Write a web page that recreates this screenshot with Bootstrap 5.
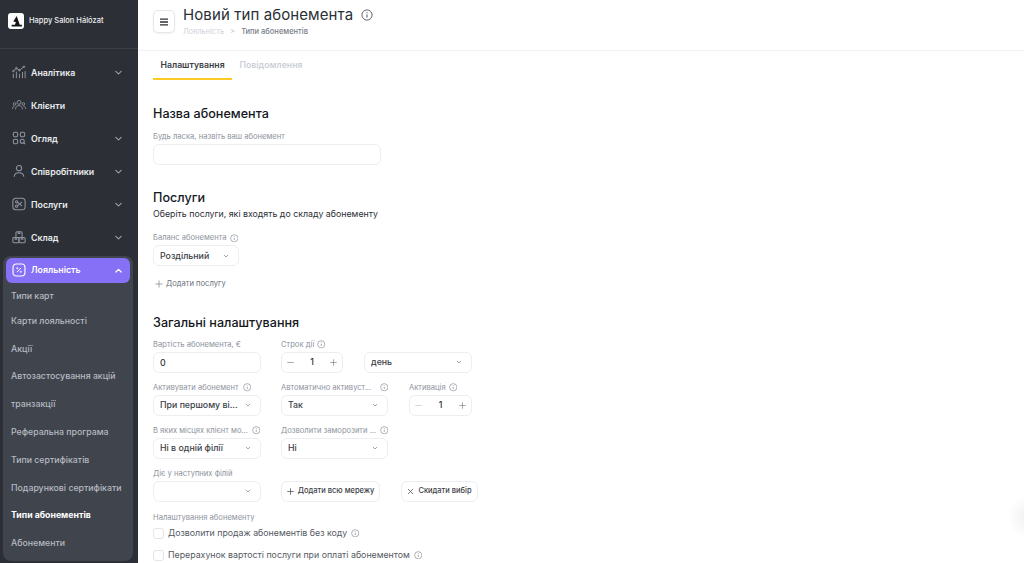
<!DOCTYPE html>
<html lang="uk">
<head>
  <meta charset="UTF-8">
  <title>Новий тип абонемента</title>
  <meta name="viewport" content="width=device-width, initial-scale=1">
  <link href="https://cdn.jsdelivr.net/npm/bootstrap@5.3.3/dist/css/bootstrap.min.css" rel="stylesheet">
  <style>
    html, body { height: 563px; overflow: hidden; }
    body { font-family: Inter, "Noto Sans", sans-serif; background: #fff; color: #1b1e24; font-size: 10px; }
    .app-shell { height: 563px; }

    /* sidebar */
    .side { width: 138px; flex: none; background: #2c3036; color: #fff; height: 563px; overflow: hidden; }
    .brand-row { height: 49px; padding: 13px 8px 0; border-bottom: 1px solid #3a3e45; font-size: 7.5px; font-weight: 500; gap: 5px; margin-bottom: 7px; }
    .brand-logo { width: 16px; height: 16px; background: #fff; border-radius: 3px; flex: none; }
    .brand-name { line-height: 16px; color: #eceef1; }
    .side-item { height: 33px; padding: 0 15px 0 11.5px; font-size: 8.8px; font-weight: 600; color: #e9ebee; gap: 5.5px; }
    .side-item .ic { width: 14px; height: 14px; color: #8f95a0; flex: none; }
    .side-item .caret-ic { width: 9px; height: 9px; color: #a3a8b1; margin-left: auto; }
    .side-group { background: #40444c; border-radius: 8px; margin: 2px 5px 2px 3px; padding: 2px 3px 0; height: 306px; }
    .side-active { height: 25px; background: #8670f6; border-radius: 6px; padding: 0 7px 0 6px; font-size: 8.8px; font-weight: 600; color: #fff; gap: 5px; }
    .side-active .ic { width: 14px; height: 14px; flex: none; }
    .side-active .caret-ic { width: 9px; height: 9px; margin-left: auto; }
    .side-sub { height: 27.8px; padding-left: 5px; font-size: 8.75px; font-weight: 500; color: #b7bbc3; white-space: nowrap; }
    .side-sub.is-first { height: 25px; padding-top: 3px; }
    .side-sub.is-current { color: #fff; font-weight: 700; }

    /* header */
    .top-bar { height: 51px; border-bottom: 1px solid #f1f2f4; padding: 0 15px; gap: 8px; }
    .menu-btn { width: 22px; height: 23px; margin-top: 10px; border: 1px solid #e4e6ea; border-radius: 5px; background: #fff; padding: 0; box-shadow: 0 1px 2px rgba(20,25,40,.05); }
    .page-title { font-size: 15px; font-weight: 400; letter-spacing: .1px; line-height: 20px; margin: 5px 0 0; color: #2b2f36; }
    .info-ic { width: 8.5px; height: 8.5px; color: #8b909a; flex: none; }
    .page-title + .info-ic { width: 12px; height: 12px; color: #5d626c; margin: 9px 0 0 8px; }
    .crumbs { font-size: 7.5px; margin: 1px 0 0; --bs-breadcrumb-divider: '>'; }
    .crumbs .breadcrumb-item { color: #cfd3d9; }
    .crumbs .breadcrumb-item.active { color: #797e88; font-weight: 500; }
    .crumbs .breadcrumb-item + .breadcrumb-item { padding-left: 6px; }
    .crumbs .breadcrumb-item + .breadcrumb-item::before { color: #c6cad0; padding-right: 6px; }

    /* tabs */
    .tab-strip { padding-left: 15px; height: 29px; }
    .tab-link { font-size: 8.7px; font-weight: 600; padding: 0 7.5px; line-height: 28px; height: 29px; color: #ccd0d6; text-decoration: none; }
    .tab-link.is-on { color: #3a3e46; border-bottom: 2px solid #fdca22; }

    /* form */
    .form-area { padding: 0 15px; }
    .sect-title { font-size: 12.6px; font-weight: 500; line-height: 18px; margin: 24px 0 0; color: #15181d; }
    .sect-title.is-first { margin-top: 25px; }
    .sect-sub { font-size: 8.8px; line-height: 12px; margin: 1px 0 0; color: #2b2f36; }
    .fld-label { font-size: 7.6px; color: #8e939c; line-height: 10px; margin: 0 0 2px; gap: 3px; white-space: nowrap; }
    .fld-label.after-head { margin-top: 9px; }
    .fld-label.after-sub { margin-top: 13px; }
    .fld-label.after-rows { margin-top: 1px; }
    .fld-label.pad-10 { padding-right: 10px; }
    .fld-label.pad-1 { padding-right: 1px; }
    .fld-box, .fld-box:focus { height: 21px; min-height: 21px; border: 1px solid #eceef1; border-radius: 6px; font-size: 8.8px; color: #2f333a; padding: 0 6px; box-shadow: none; }
    select.fld-box, select.fld-box:focus {
      background-image: url("data:image/svg+xml,%3csvg xmlns='http://www.w3.org/2000/svg' viewBox='0 0 12 12'%3e%3cpath fill='none' stroke='%23868b95' stroke-width='1.6' stroke-linecap='round' stroke-linejoin='round' d='M2.5 4.5 6 8l3.5-3.5'/%3e%3c/svg%3e");
      background-size: 6px 6px; background-position: right 9px center; padding-right: 18px; font-weight: 500; color: #3c4048;
    }
    input.fld-box { font-weight: 500; }
    .w-108 { width: 108px; }
    .w-107 { width: 107px; }
    .w-86 { width: 86px; }
    .w-228 { width: 228px; }
    .stepper { height: 21px; border: 1px solid #eceef1; border-radius: 6px; padding: 0 5px; font-size: 8.8px; color: #2f333a; font-weight: 500; }
    .stepper svg { width: 7px; height: 7px; color: #7d828c; }
    .stepper .is-muted { color: #c3c7ce; }
    .w-62 { width: 62px; }
    .w-63 { width: 63px; }
    .nudge-1 { margin-left: 1px; }
    .rows-wrap { margin-top: 7.5px; }
    .form-row-gap { gap: 20px; height: 43px; }
    .btn-pair { gap: 21px; height: 33px; }
    .ghost-btn { height: 21px; border: 1px solid #eceef1; border-radius: 6px; font-size: 7.5px; font-weight: 500; padding: 0; background: #fff; color: #3c4048; gap: 4px; white-space: nowrap; }
    .ghost-btn svg { width: 7px; height: 7px; flex: none; }
    .w-99 { width: 99px; }
    .w-77 { width: 77px; }
    .add-link { font-size: 7.6px; color: #6d727c; gap: 3.5px; height: 12px; margin-top: 12px; padding-left: 1.5px; }
    .add-link svg { width: 8px; height: 8px; color: #8b909a; }
    .chk-row { font-size: 8.8px; color: #555a63; gap: 4px; height: 22px; }
    .chk-row.is-first { margin-top: -2.5px; }
    .chk-row .form-check-input { width: 11px; height: 11px; margin: 0; border: 1px solid #e2e4e8; border-radius: 3px; }

    .corner-glow { position: absolute; right: 0; top: 495px; width: 16px; height: 44px; background: radial-gradient(ellipse at right center, rgba(0,0,0,.05), rgba(0,0,0,0) 70%); }
  </style>
</head>
<body>
  <svg width="0" height="0" class="position-absolute">
    <symbol id="i-info" viewBox="0 0 16 16"><circle cx="8" cy="8" r="6.8" fill="none" stroke="currentColor" stroke-width="1.3"/><path d="M8 7.2v4M8 4.4v1.2" stroke="currentColor" stroke-width="1.5"/></symbol>
    <symbol id="i-down" viewBox="0 0 12 12"><path d="M2.5 4.5 6 8l3.5-3.5" fill="none" stroke="currentColor" stroke-width="1.4" stroke-linecap="round" stroke-linejoin="round"/></symbol>
    <symbol id="i-up" viewBox="0 0 12 12"><path d="M2.5 8 6 4.5 9.5 8" fill="none" stroke="currentColor" stroke-width="1.6" stroke-linecap="round" stroke-linejoin="round"/></symbol>
    <symbol id="i-plus" viewBox="0 0 10 10"><path d="M5 1v8M1 5h8" stroke="currentColor" stroke-width="1" stroke-linecap="round"/></symbol>
    <symbol id="i-minus" viewBox="0 0 10 10"><path d="M1 5h8" stroke="currentColor" stroke-width="1" stroke-linecap="round"/></symbol>
    <symbol id="i-close" viewBox="0 0 10 10"><path d="M1.8 1.8l6.4 6.4M8.2 1.8 1.8 8.2" stroke="currentColor" stroke-width="1" stroke-linecap="round"/></symbol>
    <symbol id="i-chart" viewBox="0 0 16 16"><g fill="none" stroke="currentColor" stroke-width="1.1"><path d="M1.5 7 5 4l3.5 2L13.5 2"/><circle cx="1.5" cy="7" r=".9"/><circle cx="5" cy="3.6" r=".9"/><circle cx="8.5" cy="6" r=".9"/><circle cx="13.7" cy="2" r=".9"/><path d="M1.5 10v5M5 7.5V15M8.5 10v5M12 8v7M15 7v8"/></g></symbol>
    <symbol id="i-users" viewBox="0 0 16 16"><g fill="none" stroke="currentColor" stroke-width="1"><circle cx="8" cy="5" r="2.2"/><path d="M4 13c0-2.6 1.8-4.4 4-4.4s4 1.8 4 4.4"/><circle cx="3" cy="6.8" r="1.5"/><path d="M.4 12.6c0-2 1-3.3 2.6-3.3"/><circle cx="13" cy="6.8" r="1.5"/><path d="M15.6 12.6c0-2-1-3.3-2.6-3.3"/></g></symbol>
    <symbol id="i-grid" viewBox="0 0 16 16"><g fill="none" stroke="currentColor" stroke-width="1.2"><rect x="1.5" y="1.5" width="5" height="5" rx="1.6"/><rect x="9.5" y="1.5" width="5" height="5" rx="1.6"/><rect x="1.5" y="9.5" width="5" height="5" rx="1.6"/><circle cx="11.7" cy="11.7" r="2.3"/><path d="m13.5 13.5 1.5 1.5"/></g></symbol>
    <symbol id="i-user" viewBox="0 0 16 16"><g fill="none" stroke="currentColor" stroke-width="1.2"><circle cx="8" cy="4.8" r="3"/><path d="M2.5 14.5c.3-3 2.6-4.4 5.5-4.4s5.2 1.4 5.5 4.4"/></g></symbol>
    <symbol id="i-scissors" viewBox="0 0 16 16"><g fill="none" stroke="currentColor" stroke-width="1.2"><rect x="1" y="1.5" width="14" height="13" rx="3.5"/><circle cx="5.3" cy="5.5" r="1.3"/><circle cx="5.3" cy="10.5" r="1.3"/><path d="M6.5 6.2 11.5 10.5M6.5 9.8 11.5 5.5"/></g></symbol>
    <symbol id="i-boxes" viewBox="0 0 16 16"><g fill="none" stroke="currentColor" stroke-width="1.2"><rect x="1" y="8.5" width="7" height="6" rx="1.2"/><rect x="8" y="8.5" width="7" height="6" rx="1.2"/><rect x="4.5" y="2" width="7" height="6.5" rx="1.2"/><path d="M7 2v2h2V2M3.6 8.5v2h1.8v-2M10.6 8.5v2h1.8v-2"/></g></symbol>
    <symbol id="i-percent" viewBox="0 0 16 16"><g fill="none" stroke="currentColor"><rect x="1.2" y="1.2" width="13.6" height="13.6" rx="3.5" stroke-width="1.3"/><path d="M10.4 5.6 5.6 10.4" stroke-width="1.1"/><circle cx="6" cy="6" r=".7"/><circle cx="10" cy="10" r=".7"/></g></symbol>
  </svg>

  <div class="app-shell d-flex position-relative">
    <aside class="side d-flex flex-column">
      <div class="brand-row d-flex align-items-start">
        <span class="brand-logo d-flex align-items-center justify-content-center">
          <svg width="13" height="13" viewBox="0 0 12 12"><path d="M6.2 1 9 9H11v1.5H1.5V9H4.6L5.4 6.5 3 6z" fill="#14161a"/></svg>
        </span>
        <span class="brand-name">Happy Salon Hálózat</span>
      </div>
      <div class="side-item d-flex align-items-center"><svg class="ic"><use href="#i-chart"/></svg>Аналітика<svg class="caret-ic"><use href="#i-down"/></svg></div>
      <div class="side-item d-flex align-items-center"><svg class="ic"><use href="#i-users"/></svg>Клієнти</div>
      <div class="side-item d-flex align-items-center"><svg class="ic"><use href="#i-grid"/></svg>Огляд<svg class="caret-ic"><use href="#i-down"/></svg></div>
      <div class="side-item d-flex align-items-center"><svg class="ic"><use href="#i-user"/></svg>Співробітники<svg class="caret-ic"><use href="#i-down"/></svg></div>
      <div class="side-item d-flex align-items-center"><svg class="ic"><use href="#i-scissors"/></svg>Послуги<svg class="caret-ic"><use href="#i-down"/></svg></div>
      <div class="side-item d-flex align-items-center"><svg class="ic"><use href="#i-boxes"/></svg>Склад<svg class="caret-ic"><use href="#i-down"/></svg></div>
      <div class="side-group">
        <div class="side-active d-flex align-items-center"><svg class="ic"><use href="#i-percent"/></svg>Лояльність<svg class="caret-ic"><use href="#i-up"/></svg></div>
        <div class="side-sub is-first d-flex align-items-center">Типи карт</div>
        <div class="side-sub d-flex align-items-center">Карти лояльності</div>
        <div class="side-sub d-flex align-items-center">Акції</div>
        <div class="side-sub d-flex align-items-center">Автозастосування акцій</div>
        <div class="side-sub d-flex align-items-center">транзакції</div>
        <div class="side-sub d-flex align-items-center">Реферальна програма</div>
        <div class="side-sub d-flex align-items-center">Типи сертифікатів</div>
        <div class="side-sub d-flex align-items-center">Подарункові сертифікати</div>
        <div class="side-sub is-current d-flex align-items-center">Типи абонементів</div>
        <div class="side-sub d-flex align-items-center">Абонементи</div>
      </div>
    </aside>

    <main class="flex-grow-1">
      <header class="top-bar d-flex align-items-start">
        <button class="menu-btn btn d-flex align-items-center justify-content-center" type="button">
          <svg width="10" height="10" viewBox="0 0 10 10"><path d="M1 2.2h8M1 5h8M1 7.8h8" stroke="#2b2f36" stroke-width="1.3"/></svg>
        </button>
        <div>
          <div class="d-flex align-items-start">
            <h1 class="page-title">Новий тип абонемента</h1>
            <svg class="info-ic"><use href="#i-info"/></svg>
          </div>
          <ol class="breadcrumb crumbs">
            <li class="breadcrumb-item">Лояльність</li>
            <li class="breadcrumb-item active">Типи абонементів</li>
          </ol>
        </div>
      </header>

      <ul class="tab-strip nav">
        <li><a class="tab-link is-on d-block" href="#">Налаштування</a></li>
        <li><a class="tab-link d-block" href="#">Повідомлення</a></li>
      </ul>

      <div class="form-area">
        <h2 class="sect-title is-first">Назва абонемента</h2>
        <label class="fld-label after-head d-flex">Будь ласка, назвіть ваш абонемент</label>
        <input class="form-control fld-box w-228" type="text">

        <h2 class="sect-title">Послуги</h2>
        <p class="sect-sub">Оберіть послуги, які входять до складу абонементу</p>
        <label class="fld-label after-sub d-flex align-items-center">Баланс абонемента <svg class="info-ic"><use href="#i-info"/></svg></label>
        <select class="form-select fld-box w-86"><option>Роздільний</option></select>
        <div class="add-link d-flex align-items-center"><svg><use href="#i-plus"/></svg> Додати послугу</div>

        <h2 class="sect-title">Загальні налаштування</h2>
        <div class="rows-wrap d-flex flex-column">
          <div class="form-row-gap d-flex">
            <div class="w-108">
              <label class="fld-label d-flex">Вартість абонемента, €</label>
              <input class="form-control fld-box" type="text" value="0">
            </div>
            <div class="w-62">
              <label class="fld-label d-flex align-items-center">Строк дії <svg class="info-ic"><use href="#i-info"/></svg></label>
              <div class="stepper d-flex align-items-center justify-content-between"><svg><use href="#i-minus"/></svg>1<svg><use href="#i-plus"/></svg></div>
            </div>
            <div class="w-108 nudge-1">
              <label class="fld-label d-flex">&nbsp;</label>
              <select class="form-select fld-box"><option>день</option></select>
            </div>
          </div>
          <div class="form-row-gap d-flex">
            <div class="w-108">
              <label class="fld-label pad-10 d-flex align-items-center justify-content-between">Активувати абонемент <svg class="info-ic"><use href="#i-info"/></svg></label>
              <select class="form-select fld-box"><option>При першому ві...</option></select>
            </div>
            <div class="w-107">
              <label class="fld-label d-flex align-items-center justify-content-between">Автоматично активуст... <svg class="info-ic"><use href="#i-info"/></svg></label>
              <select class="form-select fld-box"><option>Так</option></select>
            </div>
            <div class="w-63 nudge-1">
              <label class="fld-label d-flex align-items-center">Активація <svg class="info-ic"><use href="#i-info"/></svg></label>
              <div class="stepper d-flex align-items-center justify-content-between"><svg class="is-muted"><use href="#i-minus"/></svg>1<svg><use href="#i-plus"/></svg></div>
            </div>
          </div>
          <div class="form-row-gap d-flex">
            <div class="w-108">
              <label class="fld-label pad-1 d-flex align-items-center justify-content-between">В яких місцях клієнт мо... <svg class="info-ic"><use href="#i-info"/></svg></label>
              <select class="form-select fld-box"><option>Ні в одній філії</option></select>
            </div>
            <div class="w-107">
              <label class="fld-label d-flex align-items-center justify-content-between">Дозволити заморозити ... <svg class="info-ic"><use href="#i-info"/></svg></label>
              <select class="form-select fld-box"><option>Ні</option></select>
            </div>
          </div>
          <div class="form-row-gap d-flex">
            <div class="w-108">
              <label class="fld-label d-flex">Діє у наступних філій</label>
              <select class="form-select fld-box"><option></option></select>
            </div>
            <div class="btn-pair d-flex align-items-end">
              <button class="ghost-btn w-99 btn d-flex align-items-center justify-content-center" type="button"><svg><use href="#i-plus"/></svg>Додати всю мережу</button>
              <button class="ghost-btn w-77 btn d-flex align-items-center justify-content-center" type="button"><svg><use href="#i-close"/></svg>Скидати вибір</button>
            </div>
          </div>
        </div>
        <label class="fld-label after-rows d-flex">Налаштування абонементу</label>
        <div class="chk-row is-first d-flex align-items-center"><input class="form-check-input" type="checkbox">Дозволити продаж абонементів без коду <svg class="info-ic"><use href="#i-info"/></svg></div>
        <div class="chk-row d-flex align-items-center"><input class="form-check-input" type="checkbox">Перерахунок вартості послуги при оплаті абонементом <svg class="info-ic"><use href="#i-info"/></svg></div>
      </div>
    </main>
    <div class="corner-glow"></div>
  </div>
  <script src="https://cdn.jsdelivr.net/npm/bootstrap@5.3.3/dist/js/bootstrap.bundle.min.js"></script>
</body>
</html>
